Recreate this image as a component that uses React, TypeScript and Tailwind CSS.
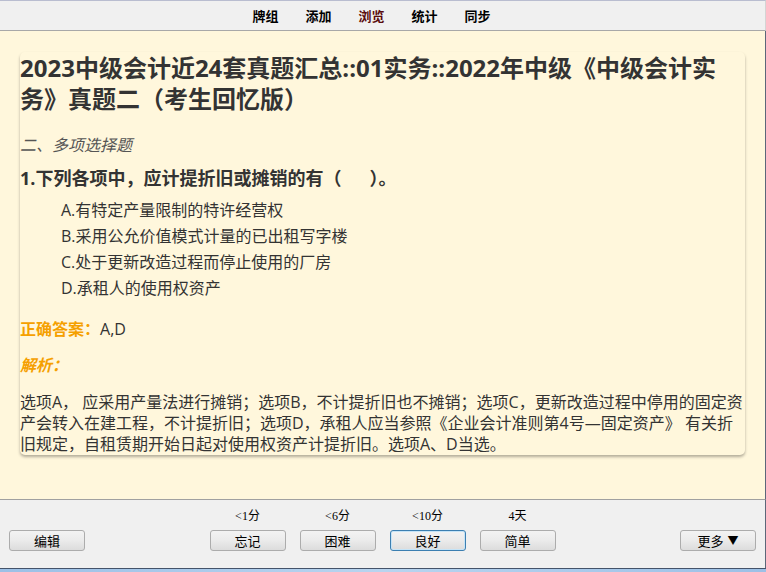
import React from 'react';

const navItems = ['牌组', '添加', '浏览', '统计', '同步'];

const options = [
  'A.有特定产量限制的特许经营权',
  'B.采用公允价值模式计量的已出租写字楼',
  'C.处于更新改造过程而停止使用的厂房',
  'D.承租人的使用权资产',
];

const answers = [
  { hint: '<1分', label: '忘记' },
  { hint: '<6分', label: '困难' },
  { hint: '<10分', label: '良好', focused: true },
  { hint: '4天', label: '简单' },
];

function Btn({ children, focused }: { children: React.ReactNode; focused?: boolean }) {
  return (
    <button
      className={
        'flex h-[21px] w-[76px] items-center justify-center rounded-[3px] border bg-linear-to-b from-[#f3f3f3] via-[#ebebeb] to-[#dcdcdc] text-[13px] leading-none text-black ' +
        (focused ? 'border-[#3c7fb1] shadow-[inset_0_0_0_1px_#c6e4f7]' : 'border-[#acacac]')
      }
    >
      {children}
    </button>
  );
}

export default function App() {
  return (
    <div className="flex h-[572px] w-[766px] flex-col overflow-hidden font-['Open_Sans','Noto_Sans_CJK_SC',sans-serif]">
      {/* toolbar */}
      <div className="flex h-[31px] shrink-0 items-center justify-center gap-[27px] border-t border-b border-r border-t-[#b9bdd0] border-b-[#a8a8a8] border-r-[#d4d4d4] bg-[#f0f0f0] pr-[22px] font-['Noto_Sans_CJK_SC',sans-serif] text-[13px] font-bold">
        {navItems.map((item) => (
          <span key={item} className={item === '浏览' ? 'text-[#5a0c0c]' : 'text-black'}>
            {item}
          </span>
        ))}
      </div>

      {/* card area */}
      <div className="flex-1 border-r border-r-[#5c6779] bg-[#fff7dc] pt-[21px] text-[#333]">
        <div className="ml-[20px] w-[725px] rounded-[5px] shadow-[0_2px_3px_rgba(0,0,0,0.3)]">
          <h1 className="text-[24px] leading-[31px] font-bold text-[#333]">
            2023中级会计近24套真题汇总::01实务::2022年中级《中级会计实
            <br />
            务》真题二（考生回忆版）
          </h1>

          <div className="mt-[19px] text-[16px] leading-[24px] italic text-[#555]">二、多项选择题</div>

          <div className="mt-[8px] text-[18px] leading-[26px] font-bold text-[#333]">
            1.下列各项中，应计提折旧或摊销的有（<span className="inline-block w-[28px]" />）。
          </div>

          <div className="mt-[6px] ml-[41px] text-[16px] leading-[26px]">
            {options.map((o) => (
              <div key={o}>{o}</div>
            ))}
          </div>

          <div className="mt-[16px] text-[16px] leading-[24px]">
            <span className="font-bold text-[#f5a000]">正确答案：</span>A,D
          </div>

          <div className="mt-[12px] text-[16px] leading-[24px] font-bold italic text-[#f5a000]">解析：</div>

          <div className="mt-[15px] text-[16px] leading-[21px] text-[#333]">
            选项A， 应采用产量法进行摊销；选项B，不计提折旧也不摊销；选项C，更新改造过程中停用的固定资
            <br />
            产会转入在建工程，不计提折旧；选项D，承租人应当参照《企业会计准则第4号—固定资产》 有关折
            <br />
            旧规定，自租赁期开始日起对使用权资产计提折旧。选项A、D当选。
          </div>
        </div>
      </div>

      {/* answer bar */}
      <div className="flex h-[69px] shrink-0 items-end border-t border-r border-t-[#a0a0a0] border-r-[#5c6779] bg-[#f0f0f0] pb-[17px] font-['Noto_Sans_CJK_SC',sans-serif]">
        <div className="flex flex-1 pl-[9px]">
          <Btn>编辑</Btn>
        </div>
        <div className="flex gap-[14px]">
          {answers.map((a) => (
            <div key={a.label} className="flex flex-col items-center">
              <span className="mb-[6px] font-['Liberation_Serif','Noto_Sans_CJK_SC',serif] text-[12px] leading-[16px] text-black">
                {a.hint}
              </span>
              <Btn focused={a.focused}>{a.label}</Btn>
            </div>
          ))}
        </div>
        <div className="flex flex-1 justify-end pr-[9px]">
          <Btn>
            更多 <span className="ml-[4px] text-[11px]">▼</span>
          </Btn>
        </div>
      </div>
      <div className="h-[4px] shrink-0 border-t border-t-[#44536a] bg-linear-to-r from-[#9cc0e6] via-[#b8d4ef] to-[#9cc0e6]" />
    </div>
  );
}
